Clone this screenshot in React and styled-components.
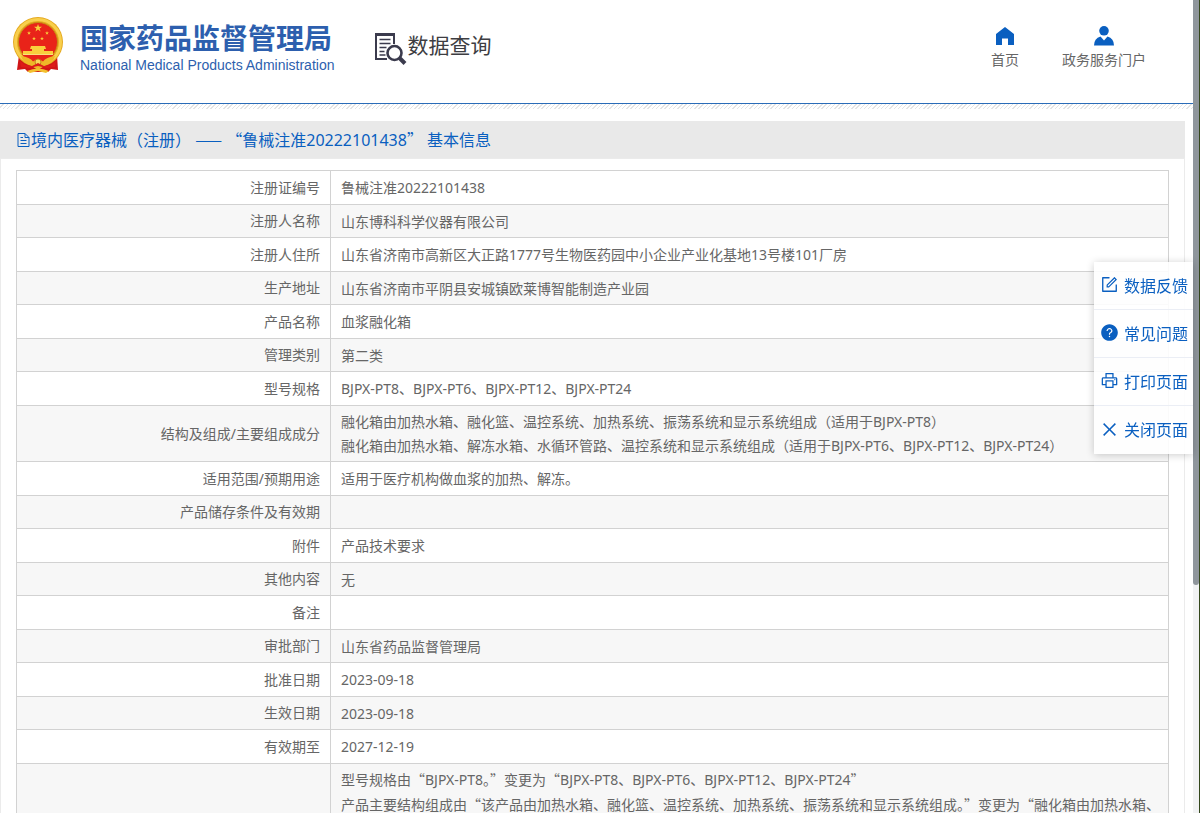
import React from 'react'
import styled, { createGlobalStyle } from 'styled-components'
import {
  AiOutlineForm,
  AiFillQuestionCircle,
  AiOutlinePrinter,
  AiOutlineClose
} from 'react-icons/ai'

const style = {
  'theme-color': '#0a5fc0',
  'logo-color': '#2d5fae',
  'text-color': '#666',
  'border-color': '#d2d2d2',
  'stripe-color': '#f7f7f7',
  'bar-color': '#e9e9e9'
}

const GlobalStyle = createGlobalStyle`
  * {
    box-sizing: border-box;
  }
  body {
    margin: 0;
    background: #fff;
    color: ${style['text-color']};
    font: 14px/24px "Noto Sans", "Noto Sans CJK SC", sans-serif;
  }
  a {
    color: inherit;
    text-decoration: none;
  }
`

const Window = styled.div`
  display: flex;
  height: 100vh;
  overflow: hidden;
`

const Page = styled.div`
  flex: 1;
  min-width: 0;
`

const ScrollTrack = styled.div`
  width: 7px;
  background: #f1f2f3;
  border-right: 1px solid #34471c;
`

const ScrollThumb = styled.div`
  height: 72%;
  background: #8f969c;
  border-radius: 0 0 3px 3px;
`

const Header = styled.header`
  display: flex;
  align-items: flex-start;
  height: 104px;
  padding: 16px 44px 0 12px;
  border-bottom: 1px solid #2a6cb8;
`

const Brand = styled.a`
  display: flex;
  flex: none;
  gap: 16px;
  color: ${style['logo-color']};
`

const BrandText = styled.div`
  padding-top: 2px;
  white-space: nowrap;
  .name {
    margin: 0;
    font: bold 28px/38px "Noto Sans CJK SC", sans-serif;
  }
  .english {
    margin: 0;
    font: 14px/18px "Liberation Sans", sans-serif;
  }
`

const Section = styled.div`
  display: flex;
  align-items: flex-start;
  margin: 11px 0 0 40px;
  color: #3d3d42;
  font: 21px/34px "Noto Sans CJK SC", sans-serif;
  svg {
    margin-top: 5px;
  }
`

const Nav = styled.nav`
  display: flex;
  gap: 43px;
  margin-left: auto;
  padding: 8px 3px 0 0;
  a {
    display: flex;
    flex-direction: column;
    align-items: center;
  }
  svg {
    fill: ${style['theme-color']};
  }
`

const Hatch = styled.div`
  height: 5px;
  margin-bottom: 12px;
  background: repeating-linear-gradient(135deg, #fff 0 2px, #e4e4e4 2px 3px);
`

const Panel = styled.main`
  margin-right: 8px;
`

const Title = styled.h1`
  display: flex;
  align-items: center;
  height: 37px;
  margin: 0;
  padding-left: 16px;
  background: ${style['bar-color']};
  color: ${style['theme-color']};
  font-size: 16px;
  font-weight: 400;
`

// full-width punctuation has to come from the CJK font
const Quote = styled.span`
  font-family: "Noto Sans CJK SC", sans-serif;
`

const PanelBody = styled.div`
  padding: 11px 15px;
  border: 1px solid #ebebeb;
`

const Table = styled.table`
  width: 100%;
  border: 1px solid ${style['border-color']};
  border-collapse: collapse;
  table-layout: fixed;
`

const Row = styled.tr`
  height: ${props => (props.$tall ? '160px' : '34px')};
  vertical-align: ${props => (props.$tall ? 'top' : 'middle')};
  &:nth-child(even) {
    height: ${props => (props.$tall ? '160px' : '33px')};
    background: ${style['stripe-color']};
  }
  th, td {
    padding: 4px 10px;
    border: 1px solid ${style['border-color']};
  }
  th {
    width: 314px;
    font-weight: 400;
    text-align: right;
  }
  td {
    padding: ${props => (props.$tall ? '3px' : '4px')} 0 3px 10px;
    white-space: nowrap;
  }
`

const SideMenu = styled.aside`
  position: fixed;
  top: 262px;
  right: 7px;
  width: 99px;
  background: rgba(255, 255, 255, .88);
  box-shadow: 0 1px 8px rgba(0, 0, 0, .2);
`

const SideButton = styled.button`
  display: flex;
  align-items: center;
  gap: 5px;
  width: 100%;
  height: 48px;
  padding: 0 0 2px 6px;
  border: 0;
  border-bottom: 1px solid #ebeef5;
  background: none;
  color: ${style['theme-color']};
  font: 16px/24px "Noto Sans CJK SC", sans-serif;
  white-space: nowrap;
  svg {
    flex: none;
    width: 19px;
    height: 19px;
  }
  &:last-child {
    border-bottom: 0;
  }
`

const quoted = text =>
  text.split(/([“”—（）]+)/).map((part, i) => (i % 2 ? <Quote key={i}>{part}</Quote> : part))

const rows = [
  ['注册证编号', '鲁械注准20222101438'],
  ['注册人名称', '山东博科科学仪器有限公司'],
  ['注册人住所', '山东省济南市高新区大正路1777号生物医药园中小企业产业化基地13号楼101厂房'],
  ['生产地址', '山东省济南市平阴县安城镇欧莱博智能制造产业园'],
  ['产品名称', '血浆融化箱'],
  ['管理类别', '第二类'],
  ['型号规格', 'BJPX-PT8、BJPX-PT6、BJPX-PT12、BJPX-PT24'],
  [
    '结构及组成/主要组成成分',
    '融化箱由加热水箱、融化篮、温控系统、加热系统、振荡系统和显示系统组成（适用于BJPX-PT8）',
    '融化箱由加热水箱、解冻水箱、水循环管路、温控系统和显示系统组成（适用于BJPX-PT6、BJPX-PT12、BJPX-PT24）'
  ],
  ['适用范围/预期用途', '适用于医疗机构做血浆的加热、解冻。'],
  ['产品储存条件及有效期', ''],
  ['附件', '产品技术要求'],
  ['其他内容', '无'],
  ['备注', ''],
  ['审批部门', '山东省药品监督管理局'],
  ['批准日期', '2023-09-18'],
  ['生效日期', '2023-09-18'],
  ['有效期至', '2027-12-19']
]

const changes = [
  '型号规格由“BJPX-PT8。”变更为“BJPX-PT8、BJPX-PT6、BJPX-PT12、BJPX-PT24”',
  '产品主要结构组成由“该产品由加热水箱、融化篮、温控系统、加热系统、振荡系统和显示系统组成。”变更为“融化箱由加热水箱、'
]

const star = 'M0-4 1-1.2 4-1.2 1.6.5 2.5 3.4 0 1.6-2.5 3.4-1.6.5-4-1.2-1-1.2Z'

function Emblem() {
  return (
    <svg width="52" height="57" viewBox="0 0 52 57" aria-hidden="true">
      <path d="M7 39 5 54l8-1 3 3h20l3-3 7 1-1-15Z" fill="#d01517" />
      <circle cx="26" cy="26" r="25" fill="#e5a91f" />
      <circle cx="26" cy="26" r="22.5" fill="none" stroke="#f8cf4c" strokeWidth="3" />
      <circle cx="26" cy="26" r="19.5" fill="#e92319" stroke="#c98a16" />
      <path d="M10 38h32l-4 6-12 6-12-6Z" fill="#e92319" />
      <g fill="#f9cf3d">
        <path d={star} transform="translate(26 12)" />
        <path d={star} transform="translate(17 17) scale(.5)" />
        <path d={star} transform="translate(35 17) scale(.5)" />
        <path d={star} transform="translate(22 22.5) scale(.5)" />
        <path d={star} transform="translate(30 22.5) scale(.5)" />
        <path d="M19 30h14l1 3h-2v2h9v3H11v-3h9v-2h-2Z" />
      </g>
      <path d="M11 38.5h30" stroke="#fae07a" />
      <path d="M9 40q9 1 12 5.500q5-4 10 0 3-4.500 12-5.500-2 7-9 9l-8 5-8-5q-7-2-9-9Z" fill="#efb728" />
      <circle cx="26" cy="46" r="3" fill="#f9d75a" stroke="#c4821a" />
      <path d="m8 45 5 4 7 1 6-3 6 3 7-1 5-4-1 6-8 1-9-2-9 2-8-1Z" fill="#dd1b18" />
      <path d="M15 55q11-5 22 0l-3 2-8-2-8 2Z" fill="#f3c12f" />
    </svg>
  )
}

function SearchDocIcon() {
  return (
    <svg width="33" height="34" viewBox="0 0 33 34" fill="none" stroke="#3b3b4d" aria-hidden="true">
      <path d="M20 12V3H2v24h11" strokeWidth="2" />
      <path d="M1 2.500h20" strokeWidth="3" />
      <path d="M5.500 7.500h11M5.500 11.500h11M5.500 15.500h7M5.500 19.500h5M5.500 23h6" strokeWidth="1.500" />
      <circle cx="20.500" cy="21" r="7" strokeWidth="2.600" />
      <path d="m25.500 26 5.500 5.500" strokeWidth="4" />
    </svg>
  )
}

function HomeIcon() {
  return (
    <svg width="20" height="24" viewBox="0 0 20 24" aria-hidden="true">
      <path d="M10 3 19 10V21H13V14.500H7V21H1V10Z" />
    </svg>
  )
}

function UserIcon() {
  return (
    <svg width="20" height="24" viewBox="0 0 20 24" aria-hidden="true">
      <circle cx="10" cy="6.800" r="4.800" />
      <path d="M0 21.500q0-7 6.500-9L10 16.500l3.500-4q6.500 2 6.500 9Z" />
    </svg>
  )
}

function DocIcon() {
  return (
    <svg width="15" height="16" viewBox="0 0 15 16" fill="none" stroke="currentColor" aria-hidden="true">
      <path d="M2 1.500h7l4 4v9H2ZM9 1.500v4h4M4.500 5.500H7M4.500 8.500h6M4.500 11.500h6" />
    </svg>
  )
}

function App() {
  return (
    <Window>
      <GlobalStyle />
      <Page>
        <Header>
          <Brand href="#">
            <Emblem />
            <BrandText>
              <p className="name">国家药品监督管理局</p>
              <p className="english">National Medical Products Administration</p>
            </BrandText>
          </Brand>
          <Section>
            <SearchDocIcon />
            数据查询
          </Section>
          <Nav>
            <a href="#"><HomeIcon />首页</a>
            <a href="#"><UserIcon />政务服务门户</a>
          </Nav>
        </Header>
        <Hatch />
        <Panel>
          <Title>
            <DocIcon />
            <span>{quoted('境内医疗器械（注册） —— “鲁械注准20222101438” 基本信息')}</span>
          </Title>
          <PanelBody>
            <Table>
              <tbody>
                {rows.map(([label, ...lines]) => (
                  <Row key={label}>
                    <th scope="row">{label}</th>
                    <td>{lines.map(line => <div key={line}>{line}</div>)}</td>
                  </Row>
                ))}
                <Row $tall>
                  <th />
                  <td>{changes.map(line => <div key={line}>{quoted(line)}</div>)}</td>
                </Row>
              </tbody>
            </Table>
          </PanelBody>
        </Panel>
      </Page>
      <ScrollTrack>
        <ScrollThumb />
      </ScrollTrack>
      <SideMenu>
        <SideButton type="button"><AiOutlineForm />数据反馈</SideButton>
        <SideButton type="button"><AiFillQuestionCircle />常见问题</SideButton>
        <SideButton type="button"><AiOutlinePrinter />打印页面</SideButton>
        <SideButton type="button"><AiOutlineClose />关闭页面</SideButton>
      </SideMenu>
    </Window>
  )
}

export default App
